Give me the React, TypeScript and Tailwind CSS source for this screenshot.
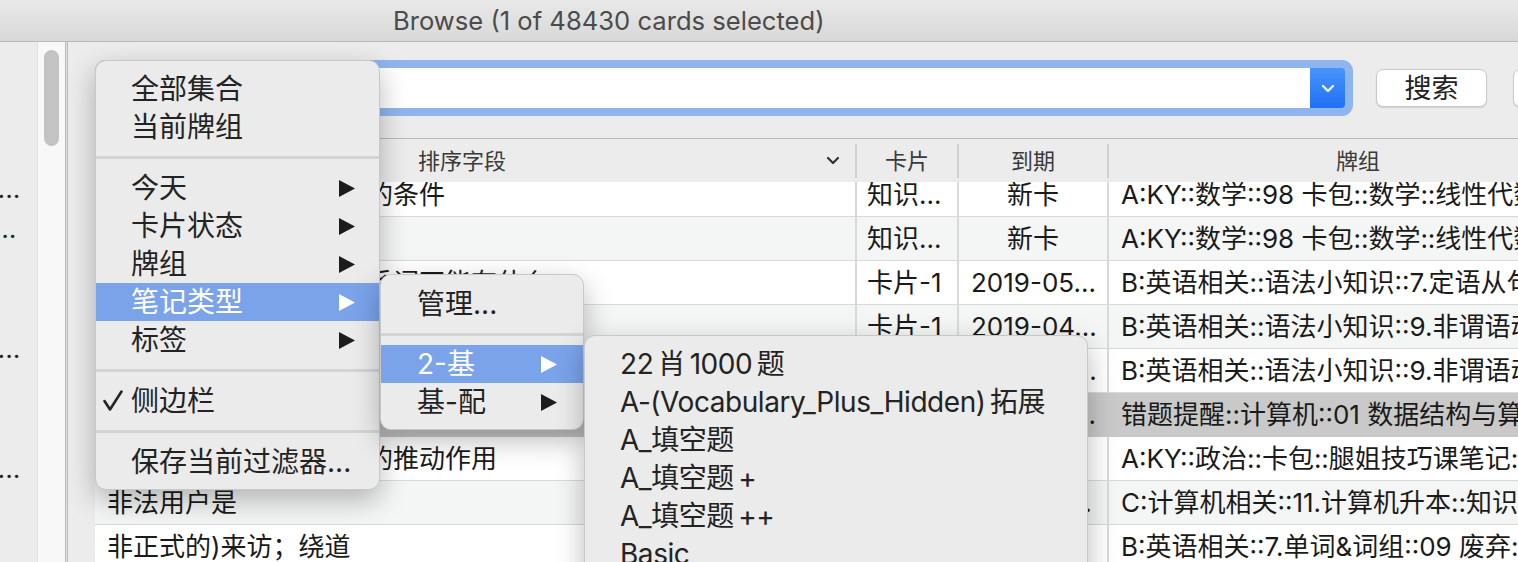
import React from "react";

const FONT = "font-['Inter','Noto_Sans_CJK_SC',sans-serif]";

type Row = {
  c1: string;
  c2: string;
  c3: string;
  c3center?: boolean;
  c4: string;
  sel?: boolean;
};

const rows: Row[] = [
  { c1: "齐次方程组有非零解时的条件", c2: "知识...", c3: "新卡", c3center: true, c4: "A:KY::数学::98 卡包::数学::线性代数::第四章" },
  { c1: "", c2: "知识...", c3: "新卡", c3center: true, c4: "A:KY::数学::98 卡包::数学::线性代数::第三章" },
  { c1: "定语从句中介词后的关系词不能有什么", c2: "卡片-1", c3: "2019-05...", c4: "B:英语相关::语法小知识::7.定语从句" },
  { c1: "", c2: "卡片-1", c3: "2019-04...", c4: "B:英语相关::语法小知识::9.非谓语动词" },
  { c1: "现在分词作状语", c2: "卡片-1", c3: "2019-04...", c4: "B:英语相关::语法小知识::9.非谓语动词" },
  { c1: "栈和队列的区别", c2: "卡片-1", c3: "2019-06...", c4: "错题提醒::计算机::01 数据结构与算法", sel: true },
  { c1: "马克思主义对社会发展的推动作用", c2: "知识...", c3: "新卡", c3center: true, c4: "A:KY::政治::卡包::腿姐技巧课笔记::" },
  { c1: "非法用户是", c2: "卡片-1", c3: "2019-07...", c4: "C:计算机相关::11.计算机升本::知识点" },
  { c1: "非正式的)来访；绕道", c2: "卡片-1", c3: "新卡", c3center: true, c4: "B:英语相关::7.单词&词组::09 废弃::" },
];

function Arrow({ white }: { white?: boolean }) {
  return (
    <svg width="16" height="17" viewBox="0 0 16 17" className="shrink-0">
      <polygon points="0,0 16,8.5 0,17" fill={white ? "#ffffff" : "#1c1c1c"} />
    </svg>
  );
}

function Check() {
  return (
    <svg width="20" height="22" viewBox="0 0 20 22" className="shrink-0">
      <polyline points="1.5,11 7,19.5 18.5,1.5" fill="none" stroke="#262626" strokeWidth="2.6" strokeLinecap="round" strokeLinejoin="round" />
    </svg>
  );
}

function Item({
  label,
  arrow,
  active,
  check,
  pl = "pl-[35px]",
  pr = "pr-[24px]",
  size = "text-[28px]",
}: {
  label: string;
  arrow?: boolean;
  active?: boolean;
  check?: boolean;
  pl?: string;
  pr?: string;
  size?: string;
}) {
  return (
    <div
      className={`relative flex h-[38px] items-center justify-between ${pl} ${pr} ${
        active ? "bg-[#7aa3ea] text-white" : "text-[#232323]"
      }`}
    >
      {check && (
        <span className="absolute left-[7px] top-[8px]">
          <Check />
        </span>
      )}
      <span className={`whitespace-nowrap ${size} leading-none`}>{label}</span>
      {arrow && <Arrow white={active} />}
    </div>
  );
}

function Sep({ h = "h-[23px]" }: { h?: string }) {
  return (
    <div className={`flex ${h} items-center`}>
      <div className="h-[3px] w-full bg-[#d3d4d4]" />
    </div>
  );
}

function Chevron({ color = "#333", w = 14 }: { color?: string; w?: number }) {
  return (
    <svg width={w} height="9" viewBox="0 0 14 9" className="shrink-0">
      <polyline points="2,2 7,7 12,2" fill="none" stroke={color} strokeWidth="2.2" strokeLinecap="round" strokeLinejoin="round" />
    </svg>
  );
}

export default function App() {
  const sidebarDots: (string | null)[] = [null, null, null, "...", "..", null, null, "...", null, null, "...", null, null];
  return (
    <div className={`relative h-[562px] w-[1518px] overflow-hidden bg-[#ececec] ${FONT}`}>
      {/* Title bar */}
      <div className="flex h-[42px] items-center border-b border-[#b9b9b9] bg-gradient-to-b from-[#e9e9e9] to-[#d8d8d8] pl-[393px]">
        <span className="whitespace-nowrap text-[25.6px] leading-none text-[#4b4b4b]">Browse (1 of 48430 cards selected)</span>
      </div>

      {/* Body */}
      <div className="flex h-[520px]">
        {/* Sidebar */}
        <div className="w-[37px] overflow-hidden bg-[#ececec] pt-[9px]">
          {sidebarDots.map((d, i) => (
            <div key={i} className="flex h-[40px] items-center overflow-hidden">
              {d && (
                <span className={`whitespace-nowrap text-[20px] font-bold leading-none tracking-[1px] text-[#222] ${d === ".." ? "-ml-[6px]" : "-ml-[2px]"}`}>
                  ...
                </span>
              )}
            </div>
          ))}
        </div>
        {/* Scroll track */}
        <div className="w-[28px] border-l border-[#e2e2e2] bg-[#f8f8f8] pl-[6px] pt-[8px]">
          <div className="h-[96px] w-[15px] rounded-full bg-[#c3c3c3]" />
        </div>
        {/* Divider */}
        <div className="w-[3px] border-x border-[#b8b8b8] bg-[#e4e4e4]" />

        {/* Main */}
        <div className="flex min-w-0 flex-1 flex-col overflow-hidden bg-[#ececec] pl-[27px]">
          {/* Search row */}
          <div className="mt-[18px] flex h-[56px] shrink-0 items-center">
            <div className="flex h-[56px] w-[1258px] shrink-0 rounded-[11px] bg-[#8fb5ef] p-[8px]">
              <div className="h-full flex-1 bg-white" />
              <div className="flex h-full w-[35px] items-center justify-center rounded-r-[4px] bg-gradient-to-b from-[#4894fc] to-[#1f70f6]">
                <Chevron color="#ffffff" w={14} />
              </div>
            </div>
            <div className="ml-[23px] flex h-[38px] w-[111px] shrink-0 items-center justify-center rounded-[7px] border border-[#c9c9c9] bg-white shadow-[0_1px_1px_rgba(0,0,0,0.12)]">
              <span className="text-[27px] leading-none text-[#222]">搜索</span>
            </div>
            <div className="ml-[26px] flex h-[38px] w-[111px] shrink-0 items-center justify-center rounded-[7px] border border-[#c9c9c9] bg-white shadow-[0_1px_1px_rgba(0,0,0,0.12)]">
              <span className="text-[27px] leading-none text-[#222]">预览</span>
            </div>
          </div>

          {/* Table */}
          <div className="mt-[22px] flex min-h-0 flex-1 flex-col border-t border-[#b8b8b8]">
            {/* Header */}
            <div className="flex h-[43px] shrink-0 items-center bg-[#ececec] text-[22px] leading-none text-[#3a3a3a]">
              <div className="flex h-full w-[760px] shrink-0 items-center pl-[323px] pr-[15px]">
                <span className="flex-1 whitespace-nowrap">排序字段</span>
                <Chevron color="#333" w={14} />
              </div>
              <div className="flex h-[34px] w-[102px] shrink-0 items-center justify-center border-l-2 border-[#d0d0d0]">卡片</div>
              <div className="flex h-[34px] w-[150px] shrink-0 items-center justify-center border-l-2 border-[#d0d0d0]">到期</div>
              <div className="flex h-[34px] w-[500px] shrink-0 items-center justify-center border-l-2 border-[#d0d0d0]">牌组</div>
            </div>
            {/* Body */}
            <div className="min-h-0 flex-1 overflow-hidden">
              <div className="-mt-[9px]">
                {rows.map((r, i) => {
                  const bg = r.sel ? "bg-[#c9c9c9]" : i % 2 === 0 ? "bg-white" : "bg-[#f4f5f5]";
                  const line = r.sel ? "border-[#c9c9c9]" : "border-[#d9d9d9]";
                  return (
                    <div key={i} className={`flex h-[44px] items-center border-b ${line} ${bg} text-[26px] leading-none text-[#1a1a1a]`}>
                      <div className="flex h-full w-[760px] shrink-0 items-center overflow-hidden whitespace-nowrap pl-[12px]">{r.c1}</div>
                      <div className={`flex h-full w-[102px] shrink-0 items-center overflow-hidden whitespace-nowrap border-l-2 ${line} pl-[10px]`}>{r.c2}</div>
                      <div
                        className={`flex h-full w-[150px] shrink-0 items-center overflow-hidden whitespace-nowrap border-l-2 ${line} ${
                          r.c3center ? "justify-center" : "pl-[12px]"
                        }`}
                      >
                        {r.c3}
                      </div>
                      <div className={`flex h-full w-[600px] shrink-0 items-center overflow-hidden whitespace-nowrap border-l-2 ${line} pl-[12px]`}>{r.c4}</div>
                    </div>
                  );
                })}
              </div>
            </div>
          </div>
        </div>
      </div>

      {/* Context menu */}
      <div className="absolute left-[95px] top-[60px] w-[285px] overflow-hidden rounded-[11px] border border-[#c8c8c8] bg-[#ebebeb] pb-[8px] pt-[9px] shadow-[0_10px_28px_rgba(0,0,0,0.28)]">
        <Item label="全部集合" />
        <Item label="当前牌组" />
        <Sep />
        <Item label="今天" arrow />
        <Item label="卡片状态" arrow />
        <Item label="牌组" arrow />
        <Item label="笔记类型" arrow active />
        <Item label="标签" arrow />
        <Sep />
        <Item label="侧边栏" check />
        <Sep />
        <Item label="保存当前过滤器..." />
      </div>

      {/* Submenu 2 */}
      <div className="absolute left-[380px] top-[274px] w-[204px] overflow-hidden rounded-[11px] border border-[#c8c8c8] bg-[#ebebeb] pb-[8px] pt-[10px] shadow-[0_10px_28px_rgba(0,0,0,0.28)]">
        <Item label="管理..." pl="pl-[36px]" pr="pr-[26px]" />
        <Sep h="h-[22px]" />
        <Item label="2-基" arrow active pl="pl-[36px]" pr="pr-[26px]" />
        <Item label="基-配" arrow pl="pl-[36px]" pr="pr-[26px]" />
      </div>

      {/* Submenu 3 */}
      <div className="absolute left-[584px] top-[335px] h-[300px] w-[504px] overflow-hidden rounded-[11px] border border-[#c8c8c8] bg-[#ebebeb] pt-[9px] tracking-[-0.45px] shadow-[0_10px_28px_rgba(0,0,0,0.28)] [word-spacing:-3px]">
        <Item label="22 肖 1000 题" />
        <Item label="A-(Vocabulary_Plus_Hidden) 拓展" />
        <Item label="A_填空题" />
        <Item label="A_填空题 +" />
        <Item label="A_填空题 ++" />
        <Item label="Basic" />
      </div>
    </div>
  );
}
